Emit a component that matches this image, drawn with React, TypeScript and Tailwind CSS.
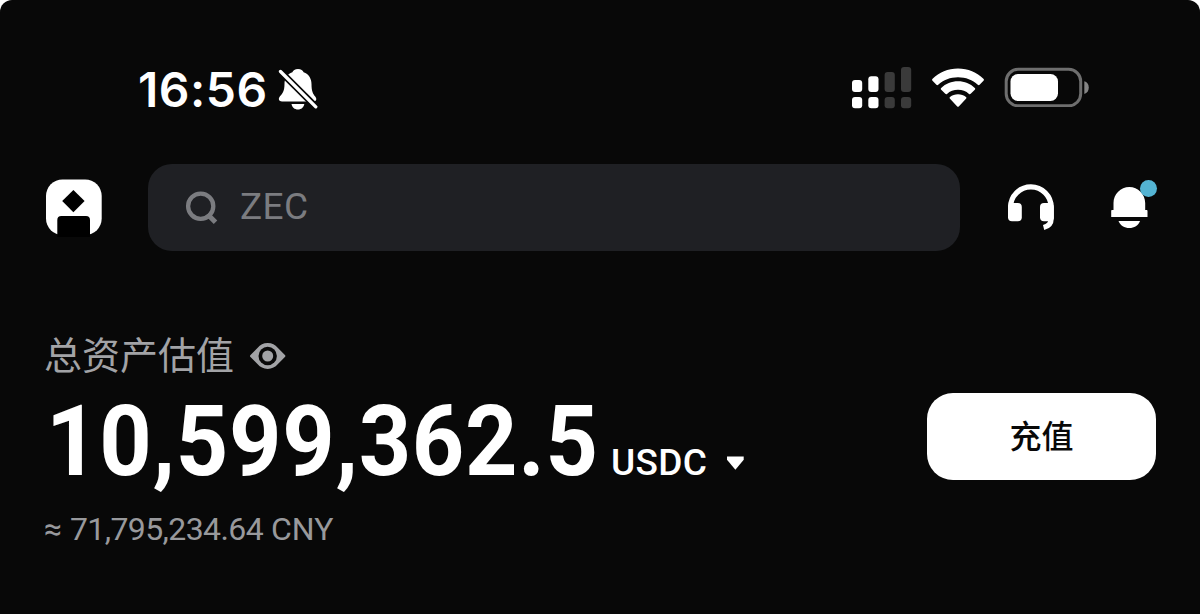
import type { ReactNode } from "react";

interface SignalBar {
  x: number;
  top: number;
  active: boolean;
}

const signalBars: SignalBar[] = [
  { x: 0, top: 13, active: true },
  { x: 16.3, top: 9.3, active: true },
  { x: 32.6, top: 5, active: false },
  { x: 49, top: 0, active: false },
];

function MutedBellIcon() {
  return (
    <svg className="h-[42px] w-[40px]" viewBox="0 0 40 42">
      <path
        d="M20 1c3 0 5 1.400 5.600 3.200 5.200 1.900 7.900 6.300 7.900 11.800 0 7.500 1.500 9.800 3.900 12.800 1.800 2.600.8 4.700-2.200 4.700H4c-3.200 0-4-2.500-2.200-4.900C4.300 25.600 6.500 23.500 6.500 16c0-5.500 2.700-9.900 7.900-11.800C15 2.400 17 1 20 1z"
        fill="#fff"
      />
      <path d="M13.500 36h12.800c-.6 3.300-3 5.500-6.400 5.500s-5.800-2.200-6.400-5.500z" fill="#fff" />
      <path d="M0 1L39.500 40.500" stroke="#080808" strokeWidth="6.600" />
      <path d="M2.500 3.500L37.800 38.800" stroke="#fff" strokeWidth="3.300" strokeLinecap="round" />
    </svg>
  );
}

function SignalIcon() {
  return (
    <svg className="h-[42px] w-[60px]" viewBox="0 0 60 42">
      {signalBars.map((bar) => (
        <g key={bar.x} fill={bar.active ? "#fff" : "#3a3a3a"}>
          <rect x={bar.x} y={bar.top} width="10.200" height={25 - bar.top} rx="3" />
          <rect x={bar.x} y="30" width="10.200" height="11.300" rx="3" />
        </g>
      ))}
    </svg>
  );
}

function WifiIcon() {
  return (
    <svg className="h-[40px] w-[52px]" viewBox="0 0 52 40">
      <path d="M26 .5C16 .5 7 4.500 .6 10.800c-.7.700-.7 1.300-.1 1.900l3.900 4c.6.600 1.200.6 1.800 0C11.500 11.900 18.300 9.200 26 9.200s14.500 2.700 19.800 7.500c.6.600 1.200.6 1.800 0l3.900-4c.6-.6.600-1.200-.1-1.900C45 4.500 36 .5 26 .5z" fill="#fff" />
      <path d="M26 13.300c-6.500 0-12.400 2.500-16.800 6.600-.6.600-.6 1.200 0 1.800l4.100 4.100c.6.600 1.100.6 1.700.1 2.900-2.600 6.800-4.100 11-4.100s8.100 1.500 11 4.100c.6.500 1.100.5 1.700-.1l4.100-4.100c.6-.6.600-1.200 0-1.800-4.400-4.100-10.300-6.600-16.800-6.600z" fill="#fff" />
      <path d="M26 26.300c-3 0-5.800 1-8 2.800-.6.500-.6 1.100 0 1.700l7 7.500c.7.700 1.300.7 2 0l7-7.500c.6-.6.600-1.200 0-1.700-2.200-1.800-5-2.800-8-2.800z" fill="#fff" />
    </svg>
  );
}

function BatteryIcon() {
  return (
    <svg className="h-[40px] w-[86px]" viewBox="0 0 86 40">
      <rect x="2.200" y="2.300" width="74.500" height="36.500" rx="12" fill="none" stroke="#6e6e6e" strokeWidth="3" />
      <rect x="6.500" y="7" width="47.500" height="27" rx="7.500" fill="#fff" />
      <path d="M80.300 14.300c2.800.5 4.500 3.100 4.500 6.300s-1.700 5.800-4.500 6.300z" fill="#858585" />
    </svg>
  );
}

function LogoIcon() {
  return (
    <svg className="h-[58px] w-[56px]" viewBox="0 0 56 58">
      <rect x="0" y="0.500" width="55.700" height="55.500" rx="16.500" fill="#fff" />
      <path d="M27.400 11L38.600 22 27.400 33.200 16.200 22z" fill="#000" />
      <path d="M11.300 58V41a4 4 0 0 1 4-4h24.700a4 4 0 0 1 4 4v17z" fill="#000" />
    </svg>
  );
}

function SearchIcon() {
  return (
    <svg className="h-[36px] w-[34px]" viewBox="0 0 34 36" fill="none" stroke="#7b7c80">
      <circle cx="15.700" cy="16.200" r="12.600" strokeWidth="4.300" />
      <path d="M22.500 24.200L30.500 32.200" strokeWidth="5" />
    </svg>
  );
}

function HeadsetIcon() {
  return (
    <svg className="h-[48px] w-[46px]" viewBox="0 0 46 48">
      <path
        d="M2.600 26V23.200a20.300 20.300 0 0 1 40.600 0V34.500c0 5-2.700 7.800-7.600 9"
        fill="none"
        stroke="#fff"
        strokeWidth="5.200"
      />
      <rect x="0" y="19" width="13.800" height="18.300" rx="4" fill="#fff" />
      <rect x="32" y="19" width="13.800" height="18.300" rx="4" fill="#fff" />
    </svg>
  );
}

function BellIcon() {
  return (
    <svg className="h-[42px] w-[37px]" viewBox="0 0 37 42" fill="#fff">
      <path d="M18.300 0C27 0 34.200 7 34.200 16V23h1.300c.6 0 1 .4 1 1V30H.2v-6c0-.6.400-1 1-1h1.300v-7C2.500 7 9.700 0 18.300 0z" />
      <path d="M7.500 34h21.600c-1.700 4.300-6 7.100-10.800 7.100S9.200 38.300 7.500 34z" />
    </svg>
  );
}

function EyeIcon() {
  return (
    <svg className="h-[26px] w-[36px]" viewBox="0 0 36 26">
      <path
        d="M17.700 0c4.300 0 7.600 2 10 4.700l7.200 7.200c.7.700.7 1.500 0 2.200l-7.200 7.200c-2.400 2.700-5.700 4.700-10 4.700s-7.600-2-10-4.700L.5 14.100c-.7-.7-.7-1.500 0-2.200l7.200-7.200C10.100 2 13.400 0 17.700 0z"
        fill="#a2a3a6"
      />
      <circle cx="17.700" cy="13" r="9.200" fill="#080808" />
      <circle cx="17.700" cy="13" r="5.500" fill="#a2a3a6" />
    </svg>
  );
}

function IconButton({ label, className = "", children }: { label: string; className?: string; children: ReactNode }) {
  return (
    <button type="button" aria-label={label} className={`relative ${className}`}>
      {children}
    </button>
  );
}

export default function App() {
  return (
    <div className="h-[614px] w-[1200px] bg-white">
      <div className="flex h-full flex-col overflow-hidden rounded-t-xl bg-[#080808] font-['Roboto','Noto_Sans_CJK_SC',sans-serif]">
        {/* Status bar */}
        <div className="flex h-[42px] mt-[67px] items-start pl-[138px] pr-[110px]">
          <div className="w-[140px] whitespace-nowrap font-['Inter',sans-serif] text-[48px] font-semibold leading-[45px] tracking-[0.5px] text-white">
            16:56
          </div>
          <div className="pt-px">
            <MutedBellIcon />
          </div>
          <div className="ml-auto flex items-start">
            <SignalIcon />
            <div className="ml-[20px] pt-px">
              <WifiIcon />
            </div>
            <div className="ml-[20px]">
              <BatteryIcon />
            </div>
          </div>
        </div>

        {/* Header */}
        <div className="mt-[55px] flex h-[87px] items-center pl-[46px]">
          <LogoIcon />
          <div className="ml-[46px] flex h-[87px] w-[812px] items-center rounded-[24px] bg-[#1f2024] pl-[37px]">
            <SearchIcon />
            <span className="ml-[21px] pb-[2px] text-[37px] leading-none tracking-[0.4px] text-[#7b7c80]">ZEC</span>
          </div>
          <IconButton label="客服" className="ml-[48px]">
            <HeadsetIcon />
          </IconButton>
          <IconButton label="通知" className="ml-[57px]">
            <BellIcon />
            <span className="absolute -top-[7px] left-[29px] size-[17px] rounded-full bg-[#54b4d3]" />
          </IconButton>
        </div>

        {/* Balance */}
        <div className="mt-[79px] flex items-start justify-between pl-[44px] pr-[44px]">
          <div>
            <div className="flex h-[52px] items-center gap-[16px]">
              <span className="text-[38px] leading-none text-[#a2a3a6]">总资产估值</span>
              <EyeIcon />
            </div>
            <div className="flex h-[118px] items-baseline text-white">
              <span className="w-[567px] whitespace-nowrap pl-[2px]">
                <span className="inline-block origin-left scale-x-[0.925] text-[99px] font-bold leading-[118px] tracking-[0.75px]">
                  10,599,362.5
                </span>
              </span>
              <span className="text-[37px] font-medium tracking-[0.3px]">USDC</span>
              <svg className="ml-[20px] h-[14px] w-[17px] -translate-y-[5px]" viewBox="0 0 17 14">
                <path d="M0 .5h16.700v3.200L8.400 13.700 0 3.700z" fill="#fff" />
              </svg>
            </div>
            <div className="flex h-[58px] items-center whitespace-pre text-[32px] leading-none text-[#98999c]">
              <span>≈ </span>
              <span className="tracking-[-0.6px]">71,795,234.64</span>
              <span> CNY</span>
            </div>
          </div>
          <button
            type="button"
            className="mt-[63px] h-[87px] w-[229px] rounded-[26px] bg-white text-[32px] font-medium text-[#080808]"
          >
            充值
          </button>
        </div>
      </div>
    </div>
  );
}
